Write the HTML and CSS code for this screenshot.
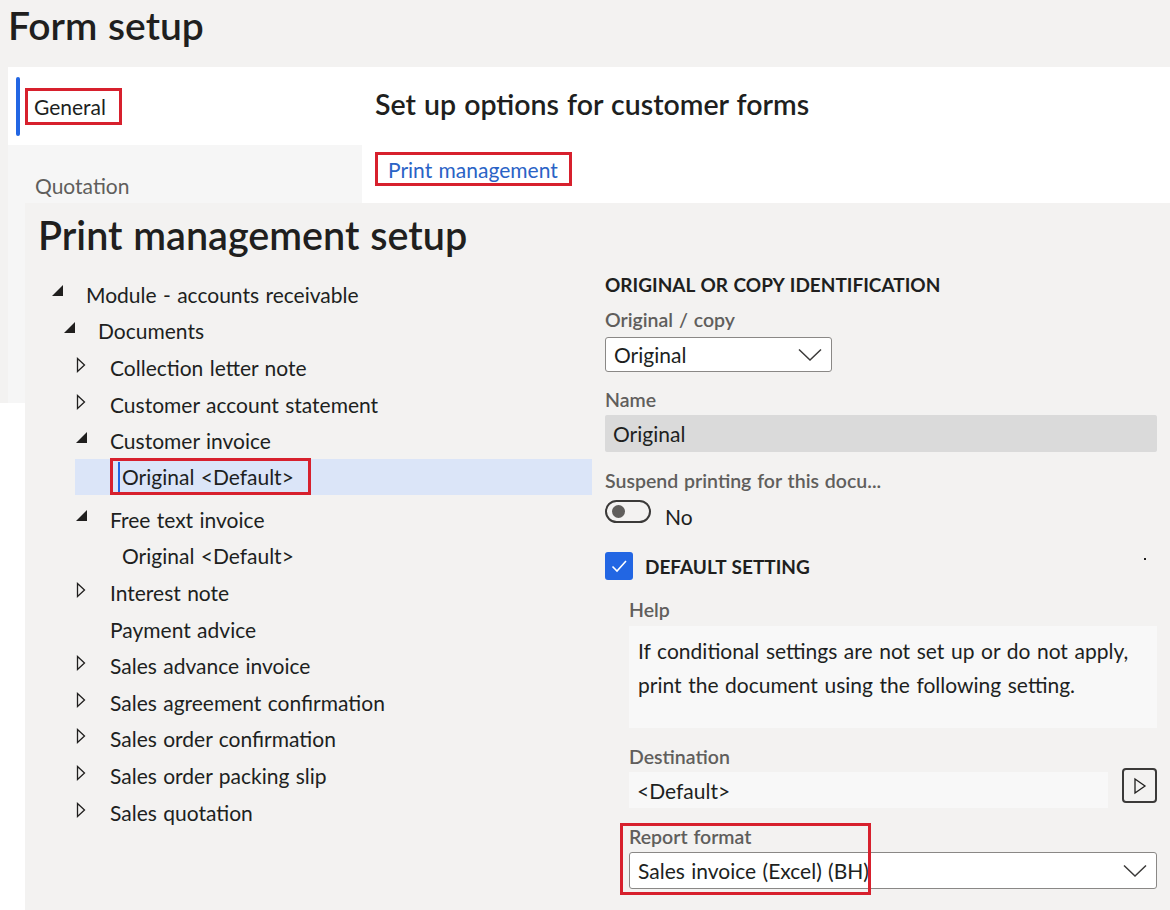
FILE: index.html
```html
<!DOCTYPE html>
<html lang="en">
<head>
<meta charset="utf-8">
<title>Form setup</title>
<link rel="stylesheet" href="styles.css">
</head>
<body>
<div class="page">
  <h1 class="page-title">Form setup</h1>
  <div class="workspace">
    <nav class="tabs">
      <div class="tab tab-active"><span class="tab-bar"></span><span class="hl hl-general">General</span></div>
      <div class="tab tab-other">Quotation</div>
    </nav>
    <section class="content">
      <h2 class="content-title">Set up options for customer forms</h2>
      <a class="link hl hl-link">Print management</a>
    </section>
  </div>
</div>

<div class="dialog">
  <h1 class="dialog-title">Print management setup</h1>
  <div class="dialog-body">
    <ul class="tree">
      <li class="row l0"><svg class="tw" viewBox="0 0 12 12"><polygon points="12,0 12,12 0,12"/></svg><span>Module - accounts receivable</span></li>
      <li class="row l1"><svg class="tw" viewBox="0 0 12 12"><polygon points="12,0 12,12 0,12"/></svg><span>Documents</span></li>
      <li class="row l2"><svg class="tc" viewBox="0 0 10 16"><path d="M1.5 1.5 L8.5 8 L1.5 14.5 Z"/></svg><span>Collection letter note</span></li>
      <li class="row l2"><svg class="tc" viewBox="0 0 10 16"><path d="M1.5 1.5 L8.5 8 L1.5 14.5 Z"/></svg><span>Customer account statement</span></li>
      <li class="row l2"><svg class="tw" viewBox="0 0 12 12"><polygon points="12,0 12,12 0,12"/></svg><span>Customer invoice</span></li>
      <li class="row sel"><span class="hl hl-sel"><span class="caret">Original &lt;Default&gt;</span></span></li>
      <li class="row l2"><svg class="tw" viewBox="0 0 12 12"><polygon points="12,0 12,12 0,12"/></svg><span>Free text invoice</span></li>
      <li class="row l3"><span class="tslot"></span><span>Original &lt;Default&gt;</span></li>
      <li class="row l2"><svg class="tc" viewBox="0 0 10 16"><path d="M1.5 1.5 L8.5 8 L1.5 14.5 Z"/></svg><span>Interest note</span></li>
      <li class="row l2"><span class="tslot"></span><span>Payment advice</span></li>
      <li class="row l2"><svg class="tc" viewBox="0 0 10 16"><path d="M1.5 1.5 L8.5 8 L1.5 14.5 Z"/></svg><span>Sales advance invoice</span></li>
      <li class="row l2"><svg class="tc" viewBox="0 0 10 16"><path d="M1.5 1.5 L8.5 8 L1.5 14.5 Z"/></svg><span>Sales agreement confirmation</span></li>
      <li class="row l2"><svg class="tc" viewBox="0 0 10 16"><path d="M1.5 1.5 L8.5 8 L1.5 14.5 Z"/></svg><span>Sales order confirmation</span></li>
      <li class="row l2"><svg class="tc" viewBox="0 0 10 16"><path d="M1.5 1.5 L8.5 8 L1.5 14.5 Z"/></svg><span>Sales order packing slip</span></li>
      <li class="row l2"><svg class="tc" viewBox="0 0 10 16"><path d="M1.5 1.5 L8.5 8 L1.5 14.5 Z"/></svg><span>Sales quotation</span></li>
    </ul>

    <div class="details">
      <div class="section-head">ORIGINAL OR COPY IDENTIFICATION</div>
      <div class="label lbl-first">Original / copy</div>
      <div class="select select-small"><span>Original</span><svg class="chev" viewBox="0 0 24 14"><path d="M1 1.5 L12 12 L23 1.5"/></svg></div>
      <div class="label lbl-name">Name</div>
      <div class="field field-disabled">Original</div>
      <div class="label lbl-suspend">Suspend printing for this docu...</div>
      <div class="toggle-row"><span class="toggle"><span class="knob"></span></span><span class="toggle-text">No</span></div>
      <div class="check-row"><span class="checkbox"><svg viewBox="0 0 20 20"><path d="M3.5 10.5 L8 15 L17 5"/></svg></span><span class="check-text">DEFAULT SETTING</span><span class="speck"></span></div>
      <div class="sub">
        <div class="label lbl-help">Help</div>
        <div class="help-box">If conditional settings are not set up or do not apply,<br>print the document using the following setting.</div>
        <div class="label lbl-dest">Destination</div>
        <div class="dest-row">
          <div class="field field-light">&lt;Default&gt;</div>
          <button class="icon-btn"><svg viewBox="0 0 14 18"><path d="M2 2 L12 9 L2 16 Z"/></svg></button>
        </div>
        <div class="report">
          <div class="label lbl-report">Report format</div>
          <div class="select select-wide"><span>Sales invoice (Excel) (BH)</span><svg class="chev" viewBox="0 0 24 14"><path d="M1 1.5 L12 12 L23 1.5"/></svg></div>
          <span class="report-mark"></span>
        </div>
      </div>
    </div>
  </div>
</div>
</body>
</html>
```

FILE: styles.css
```css
* { box-sizing: border-box; }

body {
  margin: 0;
  background: #ffffff;
  font-family: "Lato", "Open Sans", sans-serif;
  color: #201f1e;
  word-spacing: 1px;
  position: relative;
  width: 1170px;
  height: 910px;
  overflow: hidden;
}

.page {
  background: #f3f2f1;
  height: 403px;
}

.page-title {
  margin: 0;
  padding: 0 0 0 8px;
  height: 67px;
  line-height: 50px;
  font-size: 39px;
  font-weight: 600;
  color: #201f1e;
}

.workspace {
  display: flex;
  margin-left: 8px;
  height: 336px;
}

.tabs {
  width: 354px;
  display: flex;
  flex-direction: column;
  background: #f6f6f6;
}

.tab {
  display: flex;
  align-items: center;
  font-size: 21px;
}

.tab-active {
  height: 78px;
  background: #ffffff;
  padding-left: 8px;
  gap: 5px;
}

.tab-bar {
  width: 4px;
  height: 59px;
  border-radius: 2px;
  background: #2266e3;
  align-self: center;
}

.tab-other {
  height: 80px;
  padding-left: 27px;
  color: #605e5c;
}

.hl {
  border: 3px solid #d7202d;
}

.hl-general {
  height: 37px;
  display: flex;
  align-items: center;
  padding: 0 13px 0 6px;
  color: #201f1e;
}

.content {
  flex: 1;
  background: #ffffff;
  height: 136px;
  padding-left: 13px;
}

.content-title {
  margin: 0;
  padding-top: 20px;
  height: 74px;
  line-height: 34px;
  font-size: 28.5px;
  font-weight: 600;
  color: #201f1e;
}

.hl-link {
  display: inline-flex;
  align-items: center;
  height: 34px;
  margin-top: 11px;
  padding: 0 11px 0 10px;
  font-size: 21px;
  color: #2a63c6;
}

/* dialog overlay */
.dialog {
  position: absolute;
  left: 25px;
  top: 203px;
  width: 1145px;
  height: 707px;
  background: #f3f2f1;
  padding: 6px 13px 0 13px;
}

.dialog-title {
  margin: 0;
  height: 52px;
  line-height: 52px;
  font-size: 39.5px;
  font-weight: 600;
  color: #201f1e;
}

.dialog-body {
  display: grid;
  grid-template-columns: 554px 1fr;
  gap: 13px;
  margin-top: 14px;
}

.tree {
  list-style: none;
  margin: 1px 0 0 0;
  padding: 0 0 0 14px;
}

.row {
  display: flex;
  align-items: center;
  height: 36.6px;
  font-size: 21px;
  color: #201f1e;
  white-space: nowrap;
}

.row.l0 { padding-left: 0; }
.row.l1 { padding-left: 12px; }
.row.l2 { padding-left: 24px; }
.row.l3 { padding-left: 36px; }

.tw, .tc, .tslot {
  flex: none;
  width: 34px;
}

.tw {
  height: 11px;
  fill: #201f1e;
  padding-right: 23px;
  margin-top: -7px;
}

.tc {
  height: 16px;
  fill: none;
  stroke: #201f1e;
  stroke-width: 1.3;
  padding-right: 24px;
  margin-top: -5px;
}

.row.sel {
  margin-left: 23px;
  padding-left: 35px;
  height: 36px;
  margin-bottom: 6px;
  background: #dbe5f8;
}

.hl-sel {
  display: flex;
  align-items: center;
  height: 37px;
  padding: 0 14px 0 5px;
}

.caret {
  border-left: 2px solid #2266e3;
  padding-left: 2px;
  line-height: 30px;
}

/* details */
.details {
  display: flex;
  flex-direction: column;
}

.section-head {
  height: 20px;
  line-height: 20px;
  font-size: 19px;
  font-weight: 700;
  color: #201f1e;
}

.label {
  height: 20px;
  line-height: 20px;
  font-size: 19.5px;
  font-weight: 600;
  color: #605e5c;
}

.lbl-first { margin-top: 15px; }
.lbl-name { margin-top: 18px; }
.lbl-suspend { margin-top: 19px; }
.lbl-help { margin-top: 20px; }
.lbl-dest { margin-top: 19px; }
.lbl-report { margin-top: 0; }

.select {
  display: flex;
  align-items: center;
  justify-content: space-between;
  background: #ffffff;
  border: 1px solid #8a8886;
  border-radius: 3px;
  font-size: 21px;
  padding: 0 9px 0 8px;
  color: #201f1e;
}

.select-small {
  width: 227px;
  height: 35px;
  margin-top: 7px;
}

.select-wide {
  height: 37px;
  margin-top: 5px;
}

.chev {
  width: 24px;
  height: 14px;
  fill: none;
  stroke: #3b3a39;
  stroke-width: 1.5;
}

.field {
  display: flex;
  align-items: center;
  font-size: 21px;
  padding-left: 8px;
  color: #201f1e;
}

.field-disabled {
  height: 37px;
  margin-top: 5px;
  background: #dadada;
  border-radius: 2px;
}

.toggle-row {
  display: flex;
  align-items: flex-end;
  gap: 14px;
  margin-top: 8px;
  height: 30px;
}

.toggle {
  width: 46px;
  height: 23px;
  border: 2px solid #3b3a39;
  border-radius: 12px;
  display: flex;
  align-items: center;
  padding-left: 5px;
  margin-bottom: 6px;
}

.knob {
  width: 13px;
  height: 13px;
  border-radius: 50%;
  background: #605e5c;
}

.toggle-text {
  font-size: 21px;
  line-height: 24px;
  color: #201f1e;
}

.check-row {
  display: flex;
  align-items: center;
  gap: 12px;
  margin-top: 23px;
  height: 28px;
}

.checkbox {
  width: 28px;
  height: 28px;
  border-radius: 3px;
  background: #2266e3;
  display: flex;
  align-items: center;
  justify-content: center;
}

.checkbox svg {
  width: 20px;
  height: 20px;
  fill: none;
  stroke: #ffffff;
  stroke-width: 1.6;
}

.check-text {
  font-size: 19px;
  font-weight: 700;
  flex: 1;
}

.speck {
  width: 2px;
  height: 2px;
  background: #201f1e;
  margin-right: 11px;
  margin-top: -14px;
}

.sub {
  padding-left: 24px;
  display: flex;
  flex-direction: column;
}

.help-box {
  margin-top: 6px;
  height: 102px;
  background: #f8f8f8;
  padding: 8px 6px 0 9px;
  font-size: 21px;
  word-spacing: 1.2px;
  line-height: 34px;
  color: #201f1e;
  white-space: nowrap;
}

.dest-row {
  display: flex;
  align-items: flex-start;
  gap: 14px;
  margin-top: 1px;
}

.field-light {
  flex: 1;
  height: 36px;
  margin-top: 4px;
  background: #f8f8f8;
}

.icon-btn {
  width: 35px;
  height: 35px;
  border: 2px solid #3b3a39;
  border-radius: 4px;
  background: transparent;
  padding: 0;
  display: flex;
  align-items: center;
  justify-content: center;
}

.icon-btn svg {
  width: 14px;
  height: 18px;
  fill: none;
  stroke: #201f1e;
  stroke-width: 1.3;
}

.report {
  position: relative;
  margin-top: 19px;
}

.report-mark {
  position: absolute;
  left: -9px;
  top: -4px;
  width: 251px;
  height: 72px;
  border: 3px solid #d7202d;
}
```
